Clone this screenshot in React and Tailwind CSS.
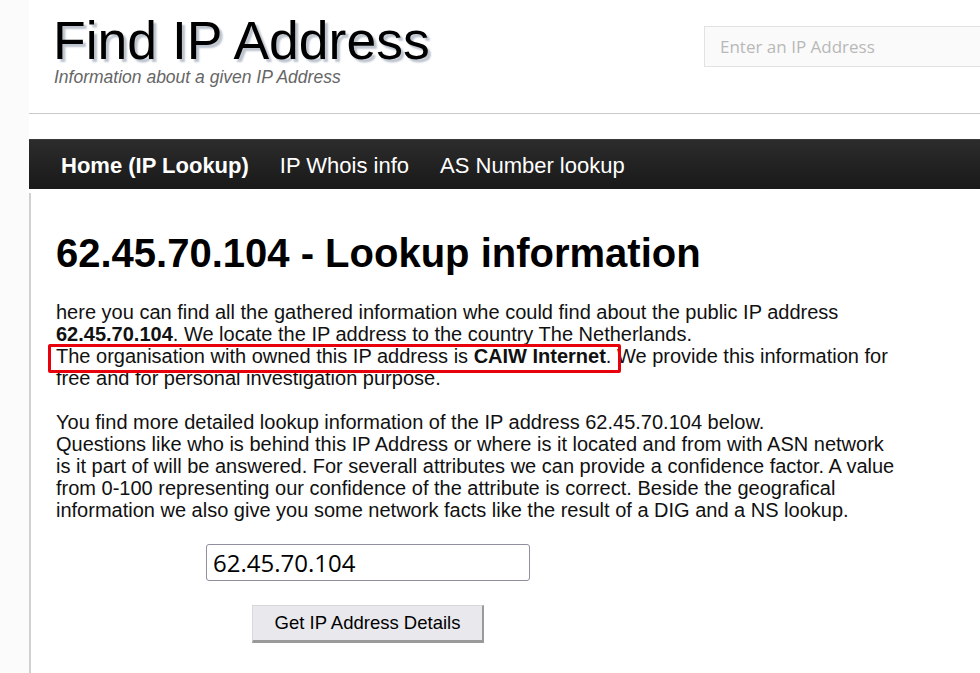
export default function App() {
  return (
    <div className="flex min-h-screen w-full overflow-hidden bg-white font-['Liberation_Sans',Arial,sans-serif] text-black">
      <div className="w-[29px] flex-none bg-[#fbfbfb]" />
      <div className="flex min-w-0 flex-1 flex-col">
        <header className="flex h-[114px] flex-none border-b border-[#cacaca]">
          <div className="w-[675px] flex-none pl-[24px] pt-[14px]">
            <h1 className="text-[53.5px] leading-[53px] text-black [text-shadow:3px_3px_2px_#bcc3cd]">
              Find IP Address
            </h1>
            <p className="pl-[1px] text-[17.5px] italic leading-[20px] text-[#666666]">
              Information about a given IP Address
            </p>
          </div>
          <div className="flex-none pt-[26px]">
            <input
              type="text"
              placeholder="Enter an IP Address"
              className="h-[41px] w-[300px] border border-[#e2e2e2] bg-[#fafafa] px-[15px] font-['Open_Sans',sans-serif] text-[17px] text-[#333] outline-none placeholder:text-[#b8b8b8]"
            />
          </div>
        </header>

        <nav className="mt-[25px] flex h-[50px] flex-none items-center border-t border-[#3a3a3a] bg-linear-to-b from-[#2c2c2c] to-[#191919] pl-[16.5px] text-[22px] text-white">
          <a className="px-[15.5px] pt-[1px] font-bold">Home (IP Lookup)</a>
          <a className="px-[15.5px] pt-[1px]">IP Whois info</a>
          <a className="px-[15.5px] pt-[1px]">AS Number lookup</a>
        </nav>

        <main className="mt-[4px] flex-1 border-l-2 border-[#d0d0d0] pb-[40px] pl-[25px] pt-[37px]">
          <h2 className="text-[40px] font-bold leading-[46px]">
            62.45.70.104 - Lookup information
          </h2>

          <div className="relative mt-[25px] w-[845px] text-[20px] leading-[22px] text-[#111]">
            <p>
              here you can find all the gathered information whe could find about the public IP address{" "}
              <b>62.45.70.104</b>. We locate the IP address to the country The Netherlands.
              <br />
              The organisation with owned this IP address is <b>CAIW Internet</b>. We provide this
              information for free and for personal investigation purpose.
              <br />
              <br />
              You find more detailed lookup information of the IP address 62.45.70.104 below.
              <br />
              Questions like who is behind this IP Address or where is it located and from with ASN
              network is it part of will be answered. For severall attributes we can provide a
              confidence factor. A value from 0-100 representing our confidence of the attribute is
              correct. Beside the geografical information we also give you some network facts like
              the result of a DIG and a NS lookup.
            </p>
            <div className="pointer-events-none absolute left-[-8px] top-[43px] h-[29px] w-[573px] rounded-[2px] border-[3px] border-[#e8000b]" />
          </div>

          <div className="mt-[23px] flex w-[624px] flex-col items-center">
            <input
              type="text"
              defaultValue="62.45.70.104"
              className="h-[37px] w-[324px] rounded-[3px] border border-[#8f8f9d] bg-white px-[6px] font-['Open_Sans',sans-serif] text-[24px] text-black outline-none"
            />
            <button
              type="button"
              className="mt-[24px] h-[38px] w-[232px] border-b-[3px] border-l border-r-2 border-t border-b-[#9a9a9a] border-l-[#d8d8d8] border-r-[#9a9a9a] border-t-[#d8d8d8] bg-[#e9e9ed] text-[18.5px] text-black"
            >
              Get IP Address Details
            </button>
          </div>
        </main>
      </div>
    </div>
  );
}
